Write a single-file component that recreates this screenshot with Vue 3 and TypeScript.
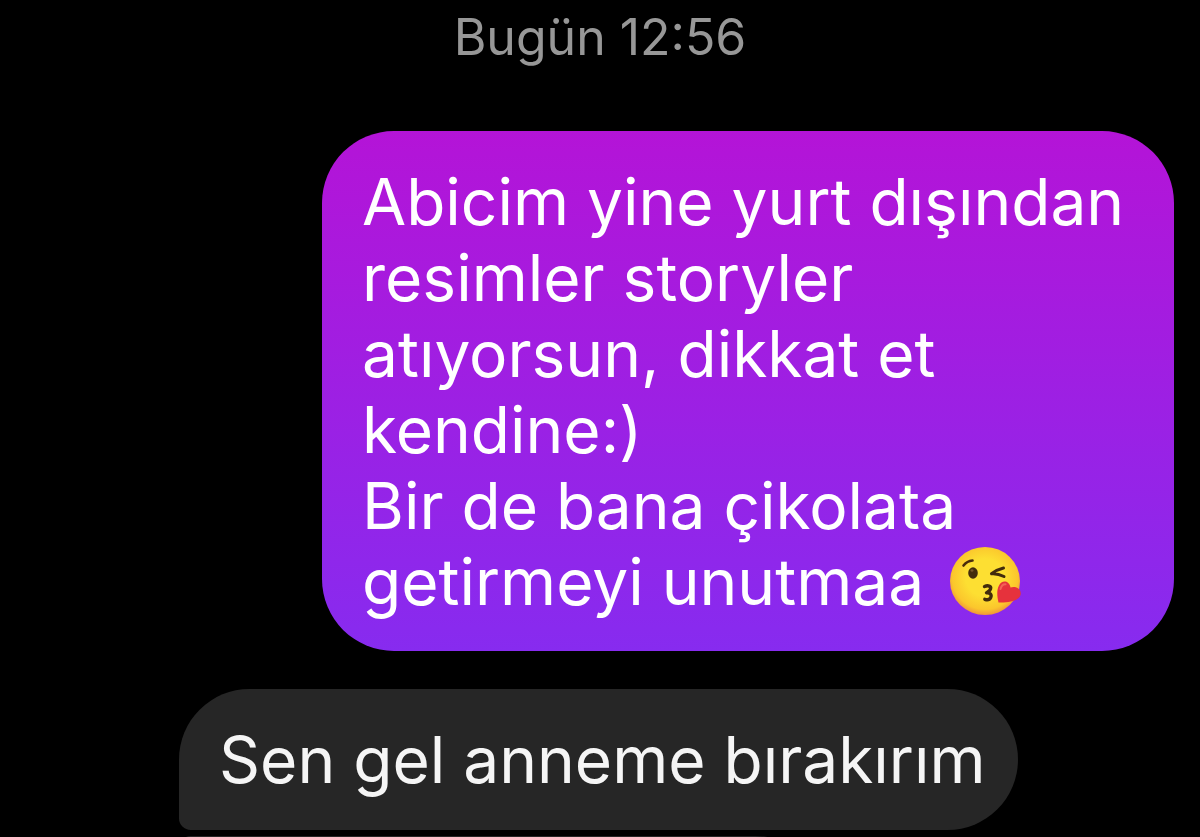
<script setup lang="ts">
interface Message {
  id: number
  side: 'sent' | 'received'
  text: string
  kiss?: boolean
}

const timestamp = 'Bugün 12:56'

const messages: Message[] = [
  {
    id: 1,
    side: 'sent',
    text: 'Abicim yine yurt dışından resimler storyler atıyorsun, dikkat et kendine:)\nBir de bana çikolata getirmeyi unutmaa',
    kiss: true,
  },
  { id: 2, side: 'received', text: 'Sen gel anneme bırakırım' },
]
</script>

<template>
  <main class="chat">
    <time class="stamp">{{ timestamp }}</time>
    <div v-for="m in messages" :key="m.id" class="row" :class="m.side">
      <p class="bubble">{{ m.text }}<template v-if="m.kiss">&nbsp;<svg class="emoji" viewBox="0 0 72 70" role="img" aria-label="😘">
            <defs>
              <radialGradient id="face" cx="0.5" cy="0.45" r="0.55">
                <stop offset="0.5" stop-color="#fddf32" />
                <stop offset="0.85" stop-color="#fbc62c" />
                <stop offset="1" stop-color="#f0963a" />
              </radialGradient>
            </defs>
            <ellipse cx="35" cy="35" rx="35" ry="34" fill="url(#face)" />
            <path d="M13.500 19.500Q17 15 22.500 14.500" fill="none" stroke="#4a2c0c" stroke-width="2.600" stroke-linecap="round" />
            <ellipse cx="23" cy="27" rx="4.800" ry="5.800" fill="#422b0d" />
            <ellipse cx="22" cy="24.500" rx="1.500" ry="1.300" fill="#76552b" />
            <path d="M53.500 22Q47 23.500 41.500 27.800Q47.500 27.200 54 30.500" fill="none" stroke="#422b0d" stroke-width="3" stroke-linecap="round" stroke-linejoin="round" />
            <path d="M34.500 40.500C38 39 41.500 40 40.500 43C40 45 37.500 46 36.500 46.800C40 46.500 42 48.500 40.700 51.500C39.500 54 37 54 34.800 53.300" fill="none" stroke="#422b0d" stroke-width="3.400" stroke-linecap="round" stroke-linejoin="round" />
            <path d="M48.500 56.500C47 50 46.500 44 49 39.500C51.500 34 59 34 60.500 41.500C66 39.500 72 43.500 70.500 49C69 54.500 59 57 48.500 56.500Z" fill="#e6323c" />
            <path d="M50.500 43Q52 38 55.500 38.300" fill="none" stroke="#f26358" stroke-width="2" stroke-linecap="round" />
          </svg></template></p>
    </div>
    <div class="row received following">
      <p class="bubble" aria-hidden="true"></p>
    </div>
  </main>
</template>

<style>
html,
body {
  margin: 0;
  background: #000;
}
</style>

<style scoped>
.chat {
  display: flex;
  flex-direction: column;
  box-sizing: border-box;
  height: 100vh;
  overflow: hidden;
  padding: 7px 26px 0 179px;
  background: #000;
  font-family: Inter, Roboto, "Liberation Sans", sans-serif;
}

.stamp {
  align-self: center;
  flex: none;
  margin: 0 153px 64px 0;
  color: #979797;
  font-size: 50px;
  line-height: 60px;
}

.row {
  display: flex;
  flex: none;
}

.sent {
  justify-content: flex-end;
  margin-bottom: 38px;
}

.received {
  margin-bottom: 6px;
}

.bubble {
  box-sizing: border-box;
  min-height: 141px;
  margin: 0;
  padding: 33px 32px 32px 40px;
  border-radius: 72px;
  font-size: 64px;
  line-height: 76px;
  white-space: pre-line;
}

.sent .bubble {
  max-width: 852px;
  padding-bottom: 31px;
  color: #fff;
  background: linear-gradient(#b414d7, #872bef);
}

.received .bubble {
  color: #f5f5f5;
  background: #262626;
  border-radius: 72px 72px 72px 12px;
}

.following .bubble {
  width: 65%;
  border-top-left-radius: 12px;
}

.emoji {
  width: 72px;
  height: 70px;
  margin-left: 8px;
  vertical-align: -11px;
}
</style>
